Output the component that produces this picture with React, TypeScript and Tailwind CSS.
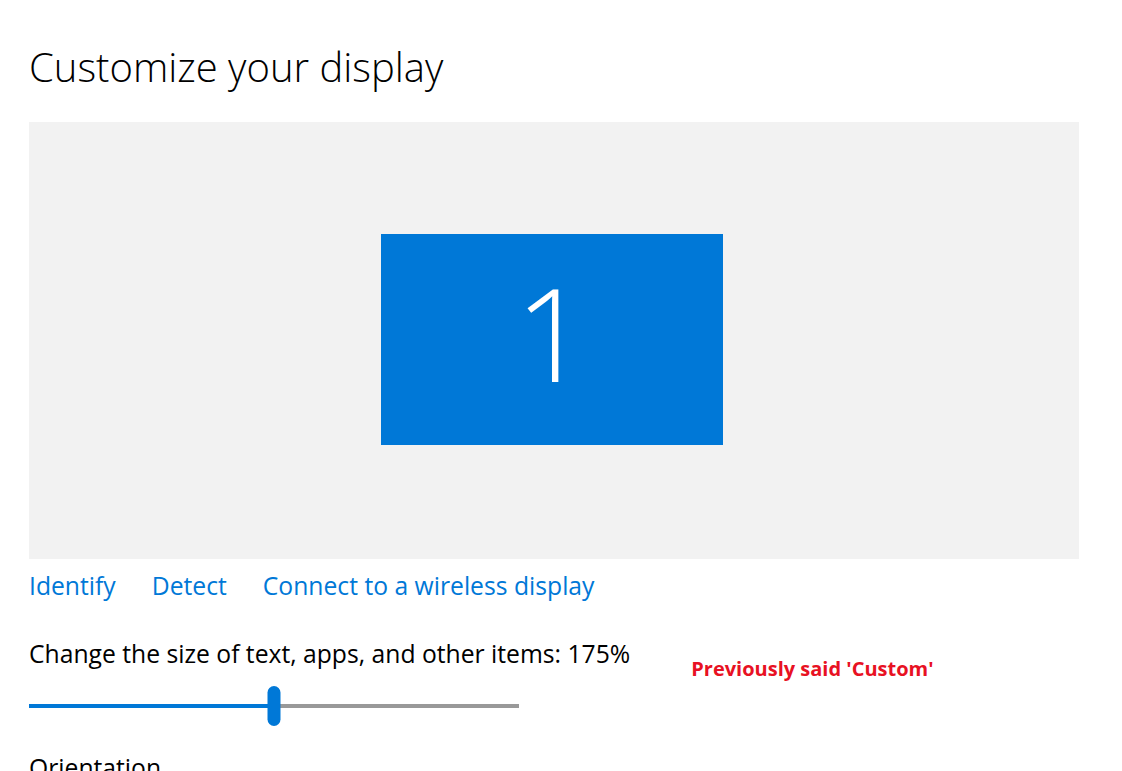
import React from 'react';

const linkClass = 'text-[#0078d7] hover:underline';

const ScaleSlider: React.FC<{ value: number }> = ({ value }) => {
    return (
        <div className="relative mt-[16px] h-[40px] w-[490px]">
            <div className="absolute left-0 right-0 top-[18px] h-[4px] bg-[#999999]" />
            <div className="absolute left-0 top-[18px] h-[4px] bg-[#0078d7]" style={{ width: `${value}%` }} />
            <div
                className="absolute top-0 h-[40px] w-[13px] -translate-x-1/2 rounded-full bg-[#0078d7]"
                style={{ left: `${value}%` }}
            />
        </div>
    );
};

const App: React.FC = () => {
    return (
        <div className="min-h-screen overflow-hidden bg-white pl-[29px] text-black font-['Open_Sans',sans-serif]">
            <h1 className="pt-[40px] text-[40px] font-light leading-[54px]">Customize your display</h1>

            {/* Monitor arrangement */}
            <div className="mt-[28px] flex h-[437px] w-[1050px] items-center justify-center bg-[#f2f2f2] pb-[2px] pr-[4px]">
                <div className="flex h-[211px] w-[342px] items-center justify-center bg-[#0078d7] pb-[16px] text-[130px] font-light leading-none text-white">
                    1
                </div>
            </div>

            <div className="mt-[8px] flex gap-[36px] text-[24.7px] leading-[38px]">
                <a href="#" className={linkClass}>Identify</a>
                <a href="#" className={linkClass}>Detect</a>
                <a href="#" className={linkClass}>Connect to a wireless display</a>
            </div>

            <div className="mt-[33px] flex items-start">
                <div>
                    <p className="text-[24.7px] leading-[32px]">Change the size of text, apps, and other items: 175%</p>
                    <ScaleSlider value={50} />
                </div>
                <p className="ml-[61px] mt-[16px] text-[20px] font-bold text-[#e81123]">Previously said 'Custom'</p>
            </div>

            <p className="mt-[26px] text-[24.7px] leading-[32px]">Orientation</p>
        </div>
    );
};

export default App;
